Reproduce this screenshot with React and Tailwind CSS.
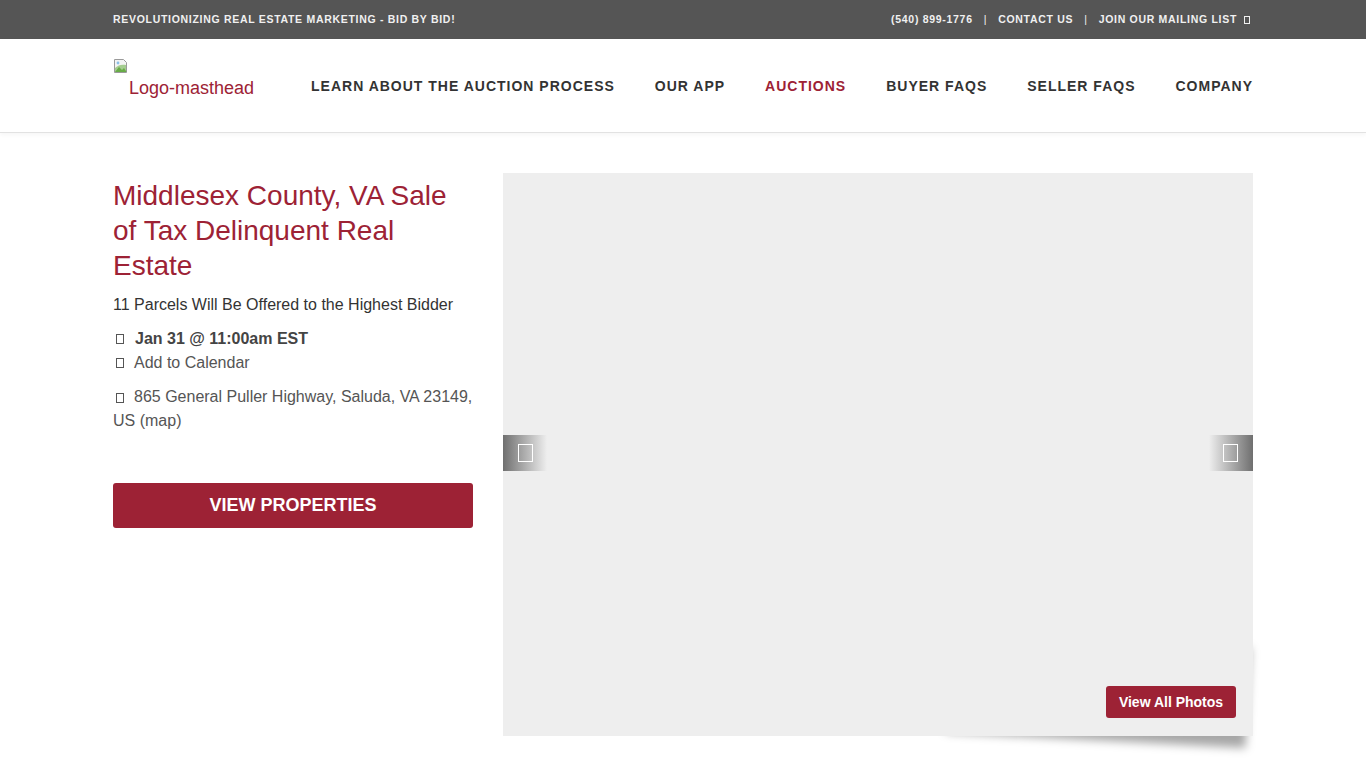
import React from "react";

const navItems = [
  { label: "Learn About the Auction Process" },
  { label: "Our App" },
  { label: "Auctions", active: true },
  { label: "Buyer FAQs" },
  { label: "Seller FAQs" },
  { label: "Company" },
];

// missing glyph box, the page shows icon-font tofu
function Tofu({ className = "" }) {
  return <span className={"inline-block border border-current " + className} />;
}

function BrokenImg() {
  return (
    <svg width="16" height="16" viewBox="0 0 16 16" className="block">
      <path d="M1.5 1.5h9l3 3v10h-12z" fill="#f4f4f4" stroke="#9a9a9a" />
      <path d="M2 14l4-5 3 3 2-2 2.5 4z" fill="#5da23f" />
      <path d="M2 10c3-3 7-4 11-3v7H2z" fill="#6fb24d" opacity="0.6" />
      <circle cx="5" cy="5" r="1.4" fill="#8ac0e8" />
    </svg>
  );
}

export default function App() {
  return (
    <div className="min-h-screen bg-white font-['Liberation_Sans',Arial,sans-serif]">
      {/* top bar */}
      <div className="bg-[#555555] h-[39px]">
        <div className="w-[1140px] mx-auto h-full flex items-center justify-between text-[10.5px] font-bold uppercase tracking-[0.7px] text-[#f0f0f0]">
          <span>Revolutionizing Real Estate Marketing - Bid by Bid!</span>
          <div className="flex items-center gap-[11px]">
            <span>(540) 899-1776</span>
            <span className="font-normal">|</span>
            <span>Contact Us</span>
            <span className="font-normal">|</span>
            <span className="flex items-center gap-[7px]">
              Join our Mailing List <Tofu className="w-[6px] h-[8px] mr-[3px]" />
            </span>
          </div>
        </div>
      </div>

      {/* header */}
      <div className="h-[94px] border-b border-[#e2e2e2] shadow-[0_2px_4px_rgba(0,0,0,0.04)]">
        <div className="w-[1140px] mx-auto h-full flex items-center justify-between">
          <div className="self-start pt-[19px]">
            <BrokenImg />
            <div className="pl-[16px] text-[18px] leading-[20px] text-[#9d2235] mt-[4px]">Logo-masthead</div>
          </div>
          <nav className="flex items-center gap-[40px] text-[14px] font-bold uppercase tracking-[1px] text-[#333333] mt-[2px]">
            {navItems.map((n) => (
              <span key={n.label} className={n.active ? "text-[#9d2235]" : ""}>
                {n.label}
              </span>
            ))}
          </nav>
        </div>
      </div>

      {/* main */}
      <div className="w-[1140px] mx-auto pt-[40px] flex gap-[30px]">
        <div className="w-[360px] shrink-0">
          <h1 className="text-[28px] leading-[35px] text-[#9d2235] pt-[5px]">
            Middlesex County, VA Sale of Tax Delinquent Real Estate
          </h1>
          <p className="mt-[11px] text-[16px] leading-[22px] text-[#333333]">
            11 Parcels Will Be Offered to the Highest Bidder
          </p>
          <div className="mt-[11px] text-[16px] leading-[24px] text-[#555555]">
            <div className="flex items-center">
              <Tofu className="w-[8px] h-[10px] ml-[3px] mr-[11px]" />
              <span className="font-bold text-[#444444]">Jan 31 @ 11:00am EST</span>
            </div>
            <div className="flex items-center">
              <Tofu className="w-[8px] h-[10px] ml-[3px] mr-[10px]" />
              <span>Add to Calendar</span>
            </div>
            <div className="mt-[10px]">
              <Tofu className="w-[8px] h-[10px] ml-[3px] mr-[10px] align-[-1px]" />
              865 General Puller Highway, Saluda, VA 23149, US (map)
            </div>
          </div>
          <button className="mt-[50px] w-full h-[45px] rounded-[3px] bg-[#9d2235] text-white text-[18px] font-bold uppercase">
            View Properties
          </button>
        </div>

        <div className="relative w-[750px] h-[563px]">
          {/* lifted-corner shadow */}
          <div className="absolute right-[8px] bottom-[10px] w-[300px] h-[100px] rotate-[3deg] shadow-[4px_14px_10px_rgba(0,0,0,0.35)]" />
          <div className="relative h-full bg-[#eeeeee]">
            <div className="absolute left-0 top-[262px] w-[44px] h-[36px] bg-gradient-to-r from-[#6f6f6f] to-transparent flex items-center pl-[15px]">
              <Tofu className="w-[15px] h-[18px] border-white border-[1.5px]" />
            </div>
            <div className="absolute right-0 top-[262px] w-[44px] h-[36px] bg-gradient-to-l from-[#6f6f6f] to-transparent flex items-center justify-end pr-[15px]">
              <Tofu className="w-[15px] h-[18px] border-white border-[1.5px]" />
            </div>
            <button className="absolute right-[17px] bottom-[18px] w-[130px] h-[32px] rounded-[3px] bg-[#9d2235] text-white text-[14px] font-bold">
              View All Photos
            </button>
          </div>
        </div>
      </div>
    </div>
  );
}
